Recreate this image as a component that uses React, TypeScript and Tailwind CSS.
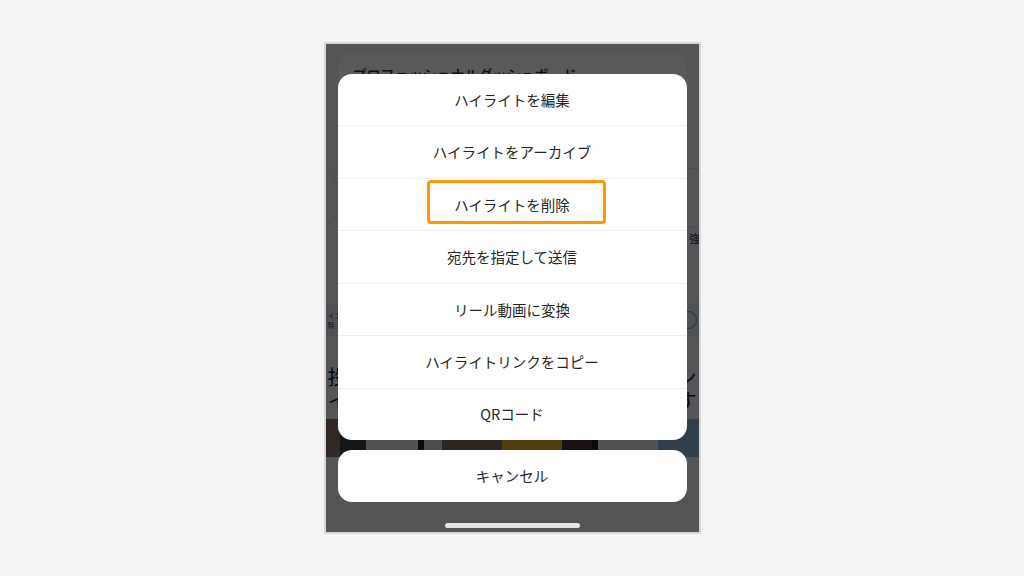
import React from "react";

const items = [
  "ハイライトを編集",
  "ハイライトをアーカイブ",
  "ハイライトを削除",
  "宛先を指定して送信",
  "リール動画に変換",
  "ハイライトリンクをコピー",
  "QRコード",
];

const font = { fontFamily: '"Noto Sans CJK JP", "Noto Sans", sans-serif' };

export default function App() {
  return (
    <div className="w-screen h-screen bg-[#f4f4f4] flex items-center justify-center" style={font}>
      <div className="relative w-[377px] h-[492px] border-2 border-[#d6d6d6] overflow-hidden bg-[#f1f1f3]">
        {/* underlying page */}
        <div className="flex flex-col pt-[10px]">
          <div className="mx-[13px] h-[100px] rounded-[12px] bg-white px-[14px] pt-[10px]">
            <div className="text-[14px] font-medium text-[#222]">プロフェッショナルダッシュボード</div>
          </div>
          <div className="flex justify-between px-[4px] mt-[14px] h-[80px]">
            <div className="flex flex-col items-center -ml-[48px]">
              <div className="w-[60px] h-[60px] rounded-full border border-[#cfd3d8] bg-[#eef1f5]" />
            </div>
            <div className="flex flex-col items-center -mr-[30px]">
              <div className="w-[60px] h-[60px] rounded-full border border-[#cfd3d8] bg-[#eef1f5]" />
              <div className="text-[11px] text-[#222] mt-[2px]">強</div>
            </div>
          </div>
          <div className="mt-[55px] h-[34px] bg-[#dfe8f2] flex items-center justify-between px-[2px]">
            <div className="text-[7px] leading-[10px] text-[#333]">イン<br />特</div>
            <div className="w-[18px] h-[18px] rounded-full border border-[#777]" />
          </div>
          <div className="mt-[28px] px-[2px] text-[20px] leading-[24px] text-[#111] flex justify-between">
            <div>投<br />イ</div>
            <div className="text-right">ン<br />す</div>
          </div>
          <div className="mt-[6px] h-[38px] flex">
            <div className="w-[14px] bg-[#8a6a60]" />
            <div className="w-[26px] bg-[#30343a]" />
            <div className="w-[52px] bg-[#e8e8e8]" />
            <div className="w-[6px] bg-[#111]" />
            <div className="w-[18px] bg-[#d9d9d9]" />
            <div className="w-[60px] bg-[#7a6658]" />
            <div className="w-[60px] bg-[#e8b020]" />
            <div className="w-[30px] bg-[#3a2a22]" />
            <div className="w-[6px] bg-[#111]" />
            <div className="w-[60px] bg-[#e6eaee]" />
            <div className="flex-1 bg-[#8aaed0]" />
          </div>
        </div>

        {/* dim overlay + sheet */}
        <div className="absolute inset-0 bg-[#060709]/[0.67] flex flex-col px-[12px] pt-[30px]">
          <div className="h-[366px] bg-white rounded-[14px] flex flex-col overflow-hidden">
            {items.map((t, i) => (
              <div
                key={t}
                className={`relative flex-1 flex items-center justify-center text-[14.5px] text-[#262626] ${
                  i > 0 ? "border-t border-[#efefef]" : ""
                }`}
              >
                {i === 2 && (
                  <div className="absolute left-[89px] top-[1px] w-[179px] h-[44px] border-[3px] border-[#ff9800] rounded-[4px]" />
                )}
                <span className="relative">{t}</span>
              </div>
            ))}
          </div>
          <div className="mt-[10px] h-[52px] bg-white rounded-[14px] flex items-center justify-center text-[14.5px] text-[#262626]">
            キャンセル
          </div>
          <div className="mt-[21px] mx-auto w-[135px] h-[5px] rounded-full bg-[#e6e6e6]" />
        </div>
      </div>
    </div>
  );
}
